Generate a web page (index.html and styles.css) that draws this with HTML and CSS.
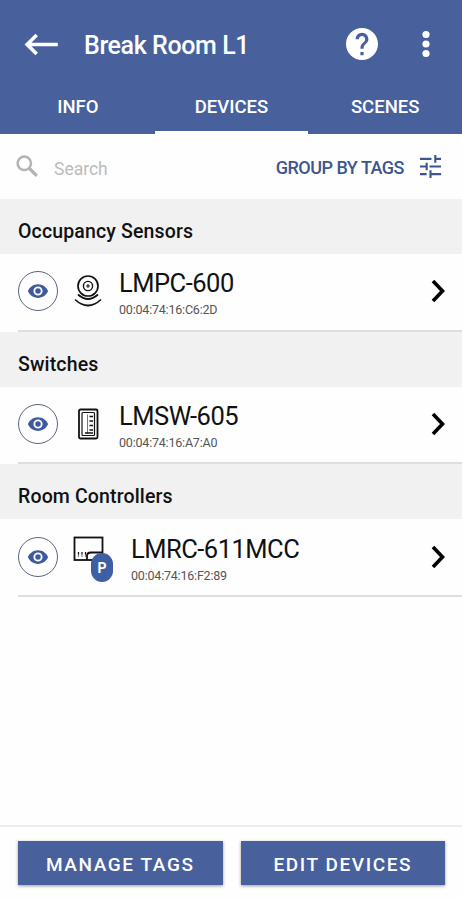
FILE: index.html
```html
<!DOCTYPE html>
<html lang="en">
<head>
    <meta charset="UTF-8">
    <meta name="viewport" content="width=device-width, initial-scale=1.0">
    <title>Break Room L1</title>
    <link rel="stylesheet" href="styles.css">
</head>
<body>
<svg class="defs" width="0" height="0">
    <symbol id="eye" viewBox="0 0 24 24">
        <path d="M12 4.5C7 4.5 2.7 7.6 1 12c1.7 4.4 6 7.5 11 7.5s9.3-3.1 11-7.5c-1.700-4.400-6-7.500-11-7.500zM12 17a5 5 0 1 1 0-10 5 5 0 0 1 0 10zm0-8a3 3 0 1 0 0 6 3 3 0 0 0 0-6z"/>
    </symbol>
    <symbol id="chevron" viewBox="0 0 14 24">
        <path d="M2 2l9.5 10L2 22" fill="none" stroke="#000" stroke-width="3.6"/>
    </symbol>
</svg>

<header class="header">
    <div class="title-bar">
        <svg class="back" viewBox="0 0 36 24">
            <path d="M35 12H4M13 2L3 12l10 10" fill="none" stroke="#fff" stroke-width="3.8"/>
        </svg>
        <h1>Break Room L1</h1>
        <svg class="help" viewBox="2 2 20 20">
            <path fill="#fff" d="M12 2C6.480 2 2 6.480 2 12s4.480 10 10 10 10-4.480 10-10S17.520 2 12 2zm1 17h-2v-2h2v2zm2.070-7.750l-.9.920C13.450 12.900 13 13.500 13 15h-2v-.5c0-1.100.45-2.100 1.170-2.830l1.240-1.260c.37-.36.59-.86.59-1.410 0-1.100-.9-2-2-2s-2 .9-2 2H8c0-2.210 1.790-4 4-4s4 1.790 4 4c0 .88-.36 1.680-.93 2.250z"/>
        </svg>
        <svg class="more" viewBox="0 0 8 28">
            <circle cx="4" cy="4.5" r="3.6" fill="#fff"/>
            <circle cx="4" cy="14" r="3.6" fill="#fff"/>
            <circle cx="4" cy="23.5" r="3.6" fill="#fff"/>
        </svg>
    </div>
    <nav class="tabs">
        <a class="tab">INFO</a>
        <a class="tab active">DEVICES</a>
        <a class="tab">SCENES</a>
    </nav>
</header>

<div class="toolbar">
    <svg class="search-icon" viewBox="0 0 22 22">
        <circle cx="8.3" cy="8.3" r="6.7" fill="none" stroke="#b4b4b4" stroke-width="2.5"/>
        <path d="M13 13l7.8 7.8" stroke="#b4b4b4" stroke-width="3.2"/>
    </svg>
    <span class="search">Search</span>
    <span class="group-by">GROUP BY TAGS</span>
    <svg class="tune" viewBox="0 0 24 24">
        <path d="M1 4h12M16 4h7M17 0v8M1 12h7M8 8v8M11 12h12M1 20h7M11 20h12M12 16v8" fill="none" stroke="#3d578e" stroke-width="2.2"/>
    </svg>
</div>

<main class="devices">
    <h2>Occupancy Sensors</h2>
    <div class="device">
        <span class="identify"><svg><use href="#eye"/></svg></span>
        <svg class="device-icon" viewBox="0 0 30 34">
            <g fill="none" stroke="#111" stroke-width="1.7">
                <circle cx="15" cy="12" r="10"/>
                <circle cx="15" cy="12" r="4.6" stroke-width="1.4"/>
                <path d="M5 20.500q10 9 20 0M2 25.500q13 12 26 0"/>
            </g>
            <path d="M15 10v4M13 12h4" stroke="#111" stroke-width="1"/>
        </svg>
        <div class="info">
            <div class="name">LMPC-600</div>
            <div class="mac">00:04:74:16:C6:2D</div>
        </div>
        <svg class="chevron"><use href="#chevron"/></svg>
    </div>

    <h2>Switches</h2>
    <div class="device">
        <span class="identify"><svg><use href="#eye"/></svg></span>
        <svg class="device-icon" viewBox="0 0 30 34">
            <g fill="none" stroke="#111">
                <rect x="6" y="2.5" width="18.5" height="29" rx="1.5" stroke-width="1.8"/>
                <rect x="9" y="5.5" width="12.5" height="23" rx="1" stroke-width="1.2"/>
                <path d="M14.500 7.500v19" stroke="#777"/>
                <path d="M16.500 9.500h3.500M16.500 14h3.500M16.500 18.500h3.500M16.500 23h3.500M12 26h8" stroke-width="1.5"/>
            </g>
        </svg>
        <div class="info">
            <div class="name">LMSW-605</div>
            <div class="mac">00:04:74:16:A7:A0</div>
        </div>
        <svg class="chevron"><use href="#chevron"/></svg>
    </div>

    <h2>Room Controllers</h2>
    <div class="device">
        <span class="identify"><svg><use href="#eye"/></svg></span>
        <div class="controller">
            <svg viewBox="0 0 32 26">
                <g fill="none" stroke="#111" stroke-width="1.8">
                    <rect x="1.5" y="1.5" width="28" height="22.5"/>
                    <path d="M14 24v-4q0-3.500 4-3.500h12"/>
                    <path d="M5.500 16v4.500M9 16v4.500M12.500 16v4.500" stroke-width="1.2" stroke-dasharray="2.8 .7"/>
                </g>
            </svg>
            <span class="badge">P</span>
        </div>
        <div class="info">
            <div class="name">LMRC-611MCC</div>
            <div class="mac">00:04:74:16:F2:89</div>
        </div>
        <svg class="chevron"><use href="#chevron"/></svg>
    </div>
</main>

<footer class="actions">
    <button>MANAGE TAGS</button>
    <button>EDIT DEVICES</button>
</footer>
</body>
</html>
```
FILE: styles.css
```css
* {
    box-sizing: border-box;
}

body {
    margin: 0;
    height: 900px;
    display: flex;
    flex-direction: column;
    font-family: Roboto, "Liberation Sans", sans-serif;
    background: #fefefe;
    color: #111;
    overflow: hidden;
}

.defs {
    position: absolute;
}

/* header */
.header {
    height: 134px;
    background: #48619d;
    color: #fff;
}

.title-bar {
    display: flex;
    align-items: center;
    height: 88px;
    padding: 0 32px 0 24px;
}

.back {
    width: 35px;
    height: 23px;
    margin-top: 1px;
}

.title-bar h1 {
    flex: 1;
    margin: 3px 0 0 25px;
    font-size: 25px;
    font-weight: 500;
    letter-spacing: -0.4px;
}

.help {
    width: 32px;
    height: 32px;
    margin-right: 44px;
}

.more {
    width: 8px;
    height: 28px;
}

.tabs {
    display: grid;
    grid-template-columns: 1fr 1fr 1fr;
    height: 46px;
    padding-left: 1px;
}

.tab {
    padding-top: 8px;
    border-bottom: 3px solid transparent;
    text-align: center;
    font-size: 18.5px;
    font-weight: 500;
    line-height: 22px;
}

.tab.active {
    border-bottom-color: #fff;
}

/* search and grouping */
.toolbar {
    display: flex;
    align-items: center;
    height: 65px;
    padding: 0 20px 0 16px;
}

.search-icon {
    width: 22px;
    height: 22px;
    margin-top: -1px;
}

.search {
    flex: 1;
    margin: 5px 0 0 16px;
    color: #bcbcbc;
    font-size: 17.5px;
}

.group-by {
    margin-top: 1px;
    color: #3d578e;
    font-size: 18px;
    font-weight: 500;
    letter-spacing: -0.5px;
}

.tune {
    width: 23px;
    height: 23px;
    margin-left: 15px;
}

/* device list */
.devices {
    flex: 1;
}

.devices h2 {
    height: 55px;
    margin: 0;
    padding: 5px 18px 0;
    background: #f1f1f1;
    font-size: 19.5px;
    font-weight: 500;
    letter-spacing: 0.15px;
    line-height: 55px;
}

.device {
    position: relative;
    display: flex;
    align-items: center;
    height: 77.7px;
    padding: 0 17px 3px 18px;
}

.device::after {
    content: "";
    position: absolute;
    left: 18px;
    right: 0;
    bottom: 0;
    height: 2px;
    background: #dedede;
}

.identify {
    display: flex;
    align-items: center;
    justify-content: center;
    width: 40px;
    height: 40px;
    border: 1px solid #59647f;
    border-radius: 50%;
}

.identify svg {
    width: 22px;
    height: 22px;
    fill: #3c5a9c;
}

.device-icon {
    width: 30px;
    height: 34px;
    margin: 0 16px 0 15px;
}

.controller {
    position: relative;
    width: 42px;
    height: 46px;
    margin: 0 16px 0 15px;
}

.controller svg {
    display: block;
    width: 32px;
    height: 26px;
    margin-top: 2px;
}

.badge {
    position: absolute;
    left: 18px;
    top: 19px;
    width: 22px;
    height: 29px;
    border-radius: 11px;
    background: #3f5fa5;
    color: #fff;
    font-size: 14px;
    font-weight: 700;
    line-height: 30px;
    text-align: center;
}

.info {
    flex: 1;
    padding-top: 6px;
}

.name {
    font-size: 25.5px;
    letter-spacing: -0.5px;
    line-height: 32px;
}

.mac {
    color: #555;
    font-size: 12.5px;
    letter-spacing: -0.2px;
    line-height: 22px;
}

.chevron {
    width: 14px;
    height: 24px;
}

/* bottom buttons */
.actions {
    display: flex;
    gap: 18px;
    height: 75px;
    padding: 14px 17px 15px 18px;
    border-top: 2px solid #ececec;
}

.actions button {
    flex: 1;
    height: 44px;
    padding: 2px 0 0;
    border: none;
    background: #48619d;
    box-shadow: 0 1px 3px rgba(0, 0, 0, 0.4);
    color: #fff;
    font-family: inherit;
    font-size: 19px;
    font-weight: 500;
    letter-spacing: 1.6px;
}
```
